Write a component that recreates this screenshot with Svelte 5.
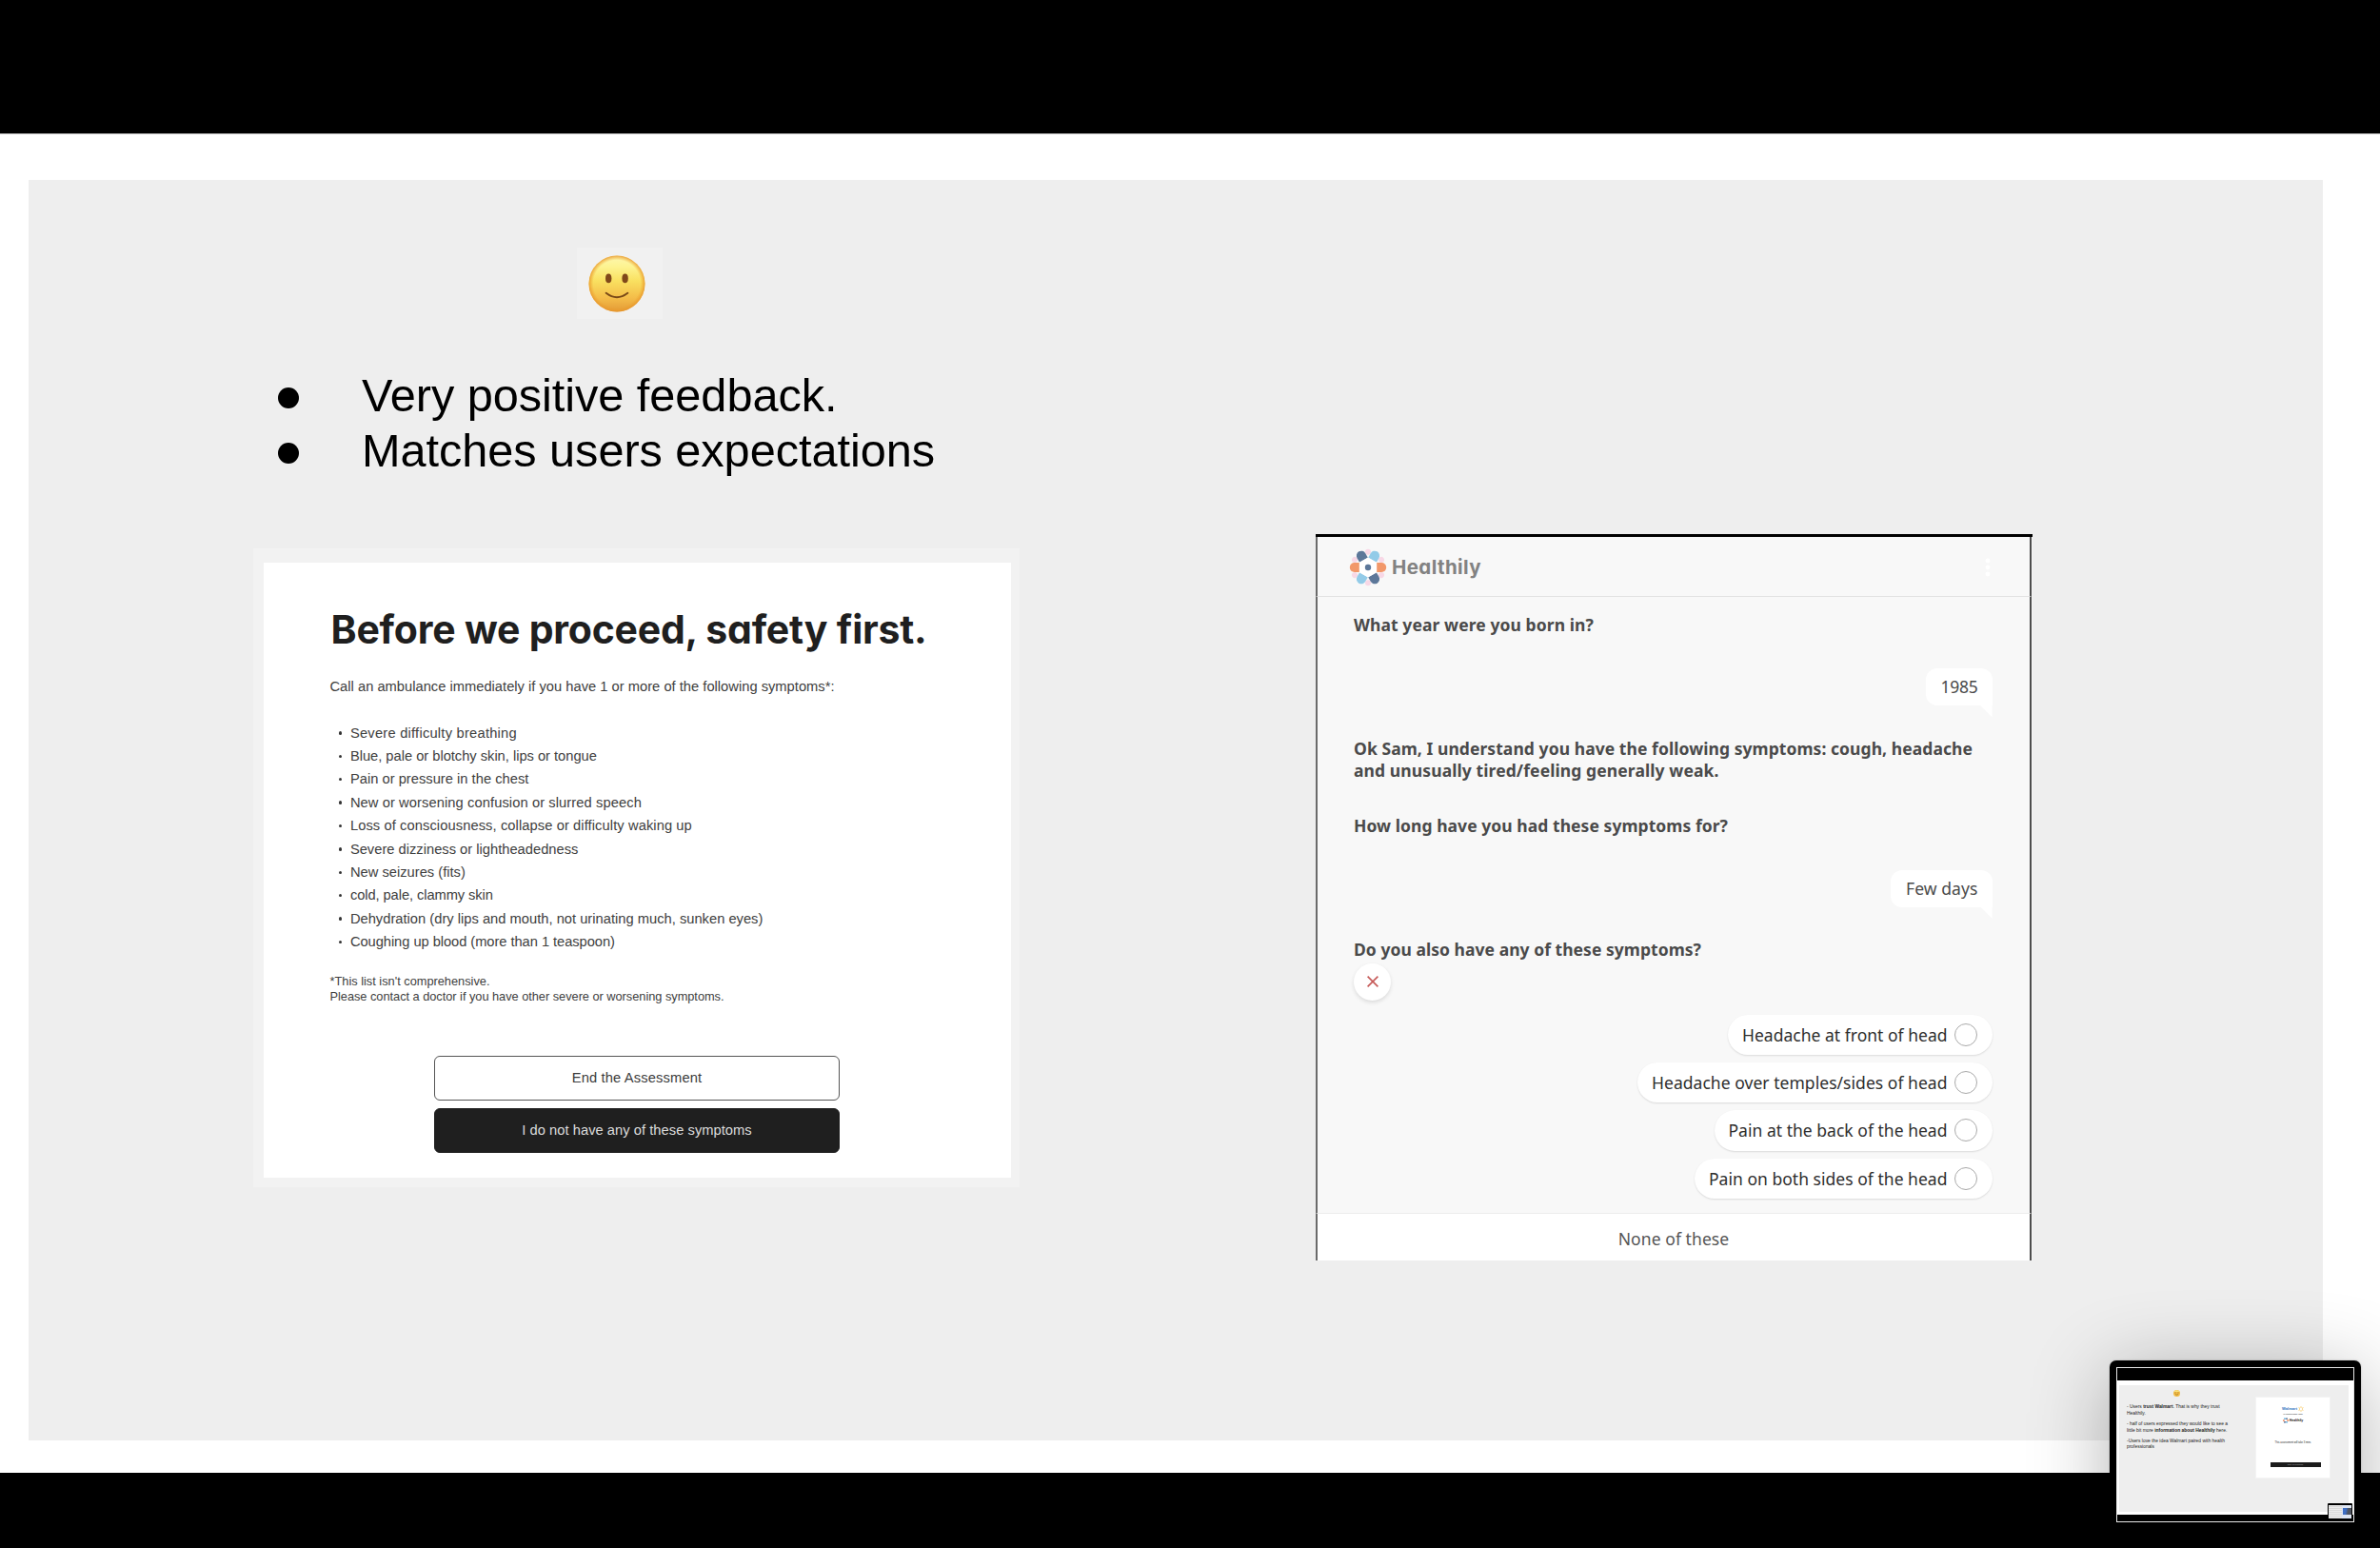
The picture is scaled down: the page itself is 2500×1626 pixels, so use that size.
<script>
  const feedback = [
    { text: 'Very positive feedback.', width: 499.5 },
    { text: 'Matches users expectations', width: 602 }
  ];

  const warnings = [
    { text: 'Severe difficulty breathing', width: 175 },
    { text: 'Blue, pale or blotchy skin, lips or tongue', width: 259 },
    { text: 'Pain or pressure in the chest', width: 187.5 },
    { text: 'New or worsening confusion or slurred speech', width: 306 },
    { text: 'Loss of consciousness, collapse or difficulty waking up', width: 359 },
    { text: 'Severe dizziness or lightheadedness', width: 239.5 },
    { text: 'New seizures (fits)', width: 121 },
    { text: 'cold, pale, clammy skin', width: 150 },
    { text: 'Dehydration (dry lips and mouth, not urinating much, sunken eyes)', width: 433.5 },
    { text: 'Coughing up blood (more than 1 teaspoon)', width: 278 }
  ];

  const options = [
    { text: 'Headache at front of head', width: 215.5 },
    { text: 'Headache over temples/sides of head', width: 310.5 },
    { text: 'Pain at the back of the head', width: 230 },
    { text: 'Pain on both sides of the head', width: 250.5 }
  ];

  const petals = [
    { angle: 0, color: '#93cbe8' },
    { angle: 60, color: '#f2986a' },
    { angle: 120, color: '#5c7799' },
    { angle: 180, color: '#93cbe8' },
    { angle: 240, color: '#f2986a' },
    { angle: 300, color: '#5c7799' }
  ];

  // Spread the tracking so a line takes up exactly `width` pixels
  function track(node, width) {
    const natural = node.getBoundingClientRect().width;
    node.style.letterSpacing = `${(width - natural) / node.textContent.length}px`;
  }
</script>

<main class="stage">
  <section class="canvas">
    <div class="slide">
      <div class="findings">
        <div class="mood">
          <svg viewBox="0 0 60 60" width="60" height="60">
            <defs>
              <linearGradient id="face" x1="0" y1="0" x2="0" y2="1">
                <stop offset="0" stop-color="#fdf7b0" />
                <stop offset="0.2" stop-color="#fdf390" />
                <stop offset="0.45" stop-color="#f9e060" />
                <stop offset="0.75" stop-color="#f4bd49" />
                <stop offset="1" stop-color="#e39a36" />
              </linearGradient>
              <radialGradient id="rim">
                <stop offset="0.84" stop-color="#eda02c" stop-opacity="0" />
                <stop offset="1" stop-color="#e8962c" stop-opacity="0.85" />
              </radialGradient>
            </defs>
            <circle cx="30" cy="30" r="29.5" fill="url(#face)" />
            <circle cx="30" cy="30" r="29.5" fill="url(#rim)" />
            <ellipse cx="21.2" cy="24.4" rx="3.2" ry="4.8" fill="#80481a" />
            <ellipse cx="38.6" cy="24.4" rx="3.2" ry="4.8" fill="#80481a" />
            <path d="M18.6 39.8 Q30 48.6 41.4 39.8" fill="none" stroke="#7a4a18" stroke-width="1.9" stroke-linecap="round" />
          </svg>
        </div>

        <ul class="feedback">
          {#each feedback as item}
            <li><i class="dot"></i><span class="line" use:track={item.width}>{item.text}</span></li>
          {/each}
        </ul>

        <div class="frame">
          <article class="safety">
            <h1><span class="line" use:track={626}>Before we proceed, safety first.</span></h1>
            <p class="lead">
              <span class="line" use:track={530}>Call an ambulance immediately if you have 1 or more of the following symptoms*:</span>
            </p>
            <ul class="warnings">
              {#each warnings as item}
                <li><i class="point"></i><span class="line" use:track={item.width}>{item.text}</span></li>
              {/each}
            </ul>
            <p class="footnote">
              <span class="line" use:track={168}>*This list isn't comprehensive.</span>
              <span class="line" use:track={414}>Please contact a doctor if you have other severe or worsening symptoms.</span>
            </p>
            <div class="actions">
              <button class="btn"><span class="line" use:track={136.5}>End the Assessment</span></button>
              <button class="btn btn-dark"><span class="line" use:track={241.5}>I do not have any of these symptoms</span></button>
            </div>
          </article>
        </div>
      </div>

      <div class="chat">
        <header class="chat-header">
          <svg class="logo" viewBox="-20 -20 40 40" width="40" height="40">
            {#each petals as petal}
              <circle cx="0" cy="-16.2" r="3" fill="#f8d8e6" transform="rotate({petal.angle})" />
            {/each}
            {#each petals as petal}
              <path
                d="M-5 -9 L-5 -14.2 A5 5 0 0 1 5 -14.2 L5 -9 Z"
                fill={petal.color}
                transform="rotate({petal.angle + 30})"
              />
            {/each}
            <path d="M0 -10.6 L9.2 -5.3 V5.3 L0 10.6 L-9.2 5.3 V-5.3 Z" fill="#fff" />
            <circle r="3.2" fill="#5c7799" />
          </svg>
          <strong class="wordmark"><span class="line" use:track={94}>Healthily</span></strong>
          <svg class="menu" viewBox="0 0 6 20" width="6" height="20">
            <circle cx="3" cy="3" r="2.4" fill="#fff" />
            <circle cx="3" cy="10" r="2.4" fill="#fff" />
            <circle cx="3" cy="17" r="2.4" fill="#fff" />
          </svg>
        </header>

        <div class="thread">
          <p class="question"><span class="line" use:track={252}>What year were you born in?</span></p>
          <div class="bubble"><span class="line" use:track={39}>1985</span></div>
          <p class="question">
            <span class="line" use:track={650}>Ok Sam, I understand you have the following symptoms: cough, headache</span>
            <span class="line" use:track={383.5}>and unusually tired/feeling generally weak.</span>
          </p>
          <p class="question"><span class="line" use:track={393}>How long have you had these symptoms for?</span></p>
          <div class="bubble"><span class="line" use:track={75.5}>Few days</span></div>
          <p class="question"><span class="line" use:track={365}>Do you also have any of these symptoms?</span></p>
          <button class="dismiss" aria-label="Dismiss">
            <svg viewBox="0 0 12 12" width="12" height="12">
              <path d="M0.6 0.6 L11.4 11.4 M11.4 0.6 L0.6 11.4" stroke="#c65a58" stroke-width="1.6" />
            </svg>
          </button>
          <div class="options">
            {#each options as option}
              <label class="option">
                <span class="line" use:track={option.width}>{option.text}</span>
                <i class="radio"></i>
              </label>
            {/each}
          </div>
        </div>

        <footer class="chat-footer"><span class="line" use:track={116.5}>None of these</span></footer>
      </div>
    </div>
  </section>

  <aside class="preview">
    <div class="screen">
      <div class="mini-canvas">
        <div class="mini-slide">
          <div class="notes">
            <svg class="mini-face" viewBox="0 0 8 8" width="7" height="7">
              <circle cx="4" cy="4" r="4" fill="#f2bd45" />
              <path d="M0.5 2.4 A4 4 0 0 1 7.5 2.4 Z" fill="#f8e27c" />
              <path d="M1.6 3.4 H3 M5 3.4 H6.4 M2.2 5.2 Q4 6.4 5.8 5.2" fill="none" stroke="#8a5a20" stroke-width="0.6" />
            </svg>
            <p>- Users <b>trust Walmart</b>. That is why they trust<br />Healthily.</p>
            <p>- half of users expressed they would like to see a<br />little bit more <b>information about Healthily</b> here.</p>
            <p>-Users love the idea Walmart paired with health<br />professionals</p>
          </div>
          <div class="partner">
            <div class="walmart">
              <span>Walmart</span>
              <svg viewBox="-4 -4 8 8" width="6" height="6">
                {#each petals as petal}
                  <path d="M0 -1.5 V-3.6" stroke="#f7c04a" stroke-width="1.1" transform="rotate({petal.angle})" />
                {/each}
              </svg>
            </div>
            <div class="with">in partnership with</div>
            <div class="healthily">
              <svg viewBox="-4 -4 8 8" width="6" height="6">
                {#each petals as petal, i}
                  <circle cy="-2.8" r="1.15" fill={['#2b4a7c', '#e8622c', '#3d9fd6'][i % 3]} transform="rotate({petal.angle + 30})" />
                {/each}
              </svg>
              <span>Healthily</span>
            </div>
            <div class="time">This assessment will take 3 mins</div>
            <div class="start">Start your symptoms</div>
          </div>
        </div>
      </div>
      <div class="nested">
        <div class="nested-text"></div>
        <div class="nested-image"></div>
      </div>
    </div>
  </aside>
</main>

<style>
  :global(body) {
    margin: 0;
    background: #000;
  }

  .stage {
    position: relative;
    box-sizing: border-box;
    width: 2500px;
    height: 1626px;
    padding: 140px 0 79px;
    background: #000;
    overflow: hidden;
    font-family: 'Liberation Sans', Arial, sans-serif;
  }

  .canvas {
    box-sizing: border-box;
    height: 1407px;
    padding: 48px 60px 34px 29.5px;
    border-top: 1px solid #a5a5a5;
    background: #fff;
  }

  .slide {
    display: flex;
    box-sizing: border-box;
    height: 1324px;
    padding-left: 236.5px;
    background: #eee;
  }

  h1,
  p,
  ul {
    margin: 0;
    padding: 0;
    list-style: none;
  }

  button {
    margin: 0;
    padding: 0;
    border: 0;
    font: inherit;
  }

  .line {
    display: inline-block;
    white-space: nowrap;
  }

  /* Left side */
  .findings {
    width: 805px;
    padding-top: 71px;
  }

  .mood {
    box-sizing: border-box;
    width: 90px;
    height: 75px;
    margin-left: 340px;
    padding: 7.5px 0 0 12px;
    background: #f1f1f1;
  }

  .feedback {
    margin-top: 51px;
    padding-left: 26px;
    font-size: 48.7px;
    line-height: 58px;
    color: #000;
  }

  .feedback li {
    display: flex;
    align-items: center;
    height: 58px;
  }

  .dot {
    width: 22px;
    height: 22px;
    margin: 5px 66px 0 0;
    border-radius: 50%;
    background: #000;
  }

  .frame {
    box-sizing: border-box;
    height: 671px;
    margin-top: 74px;
    padding: 15px 9px 10px 11px;
    background: #f2f2f2;
  }

  .safety {
    box-sizing: border-box;
    height: 646px;
    padding: 45px 0 0 69.5px;
    background: #fff;
    color: #404040;
    font-size: 14.7px;
  }

  h1 {
    padding-left: 1px;
    font-family: Inter, sans-serif;
    font-feature-settings: 'cv11';
    font-size: 41px;
    font-weight: 700;
    line-height: 50px;
    color: #1f1f1f;
  }

  .lead {
    margin-top: 23.4px;
    line-height: 24px;
  }

  .warnings {
    margin-top: 24.3px;
    padding-left: 9px;
  }

  .warnings li {
    display: flex;
    align-items: center;
    height: 24.4px;
    line-height: 24.4px;
  }

  .point {
    width: 3.4px;
    height: 3.4px;
    margin-right: 9px;
    border-radius: 50%;
    background: #333;
  }

  .footnote {
    display: flex;
    flex-direction: column;
    align-items: flex-start;
    margin-top: 21.1px;
    font-size: 12.8px;
    line-height: 16px;
  }

  .actions {
    display: flex;
    flex-direction: column;
    gap: 8px;
    width: 426px;
    margin: 54px 0 0 109.5px;
  }

  .btn {
    box-sizing: border-box;
    height: 47px;
    border: 1.5px solid #555;
    border-radius: 6px;
    background: #fff;
    color: #3c3c3c;
  }

  .btn-dark {
    border-color: #1f1f1f;
    background: #1f1f1f;
    color: #dcdcdc;
  }

  /* Right side */
  .chat {
    display: flex;
    flex-direction: column;
    box-sizing: border-box;
    width: 753px;
    height: 763px;
    margin: 372px 0 0 311px;
    border-top: 3px solid #000;
    background: #f4f4f4;
    font-family: 'Noto Sans', sans-serif;
    font-size: 17.5px;
  }

  .chat-header,
  .thread,
  .chat-footer {
    box-sizing: border-box;
    margin-right: 1px;
    border-left: 2px solid #6a6a6a;
    border-right: 2px solid #4c4c4c;
    background: #f8f8f8;
  }

  .chat-header {
    display: flex;
    align-items: center;
    height: 63px;
    padding: 1px 41px 0 33px;
    border-bottom: 1px solid #e2e2e2;
  }

  .wordmark {
    flex: 1;
    margin-left: 5px;
    font-family: Inter, sans-serif;
    font-feature-settings: 'cv11';
    font-size: 20.5px;
    font-weight: 700;
    line-height: 26px;
    color: #828282;
  }

  .thread {
    display: flex;
    flex-direction: column;
    align-items: flex-start;
    height: 647px;
    padding: 17.5px 39.5px 0 38px;
    color: #4a4a4a;
  }

  .question {
    display: flex;
    flex-direction: column;
    align-items: flex-start;
    font-weight: 700;
    line-height: 23.5px;
  }

  .bubble {
    position: relative;
    align-self: flex-end;
    height: 39px;
    margin: 34.2px 0 33.8px;
    padding: 0 15px 0 16px;
    border-radius: 12px 12px 0 12px;
    background: #fff;
    line-height: 38px;
  }

  .bubble::after {
    content: '';
    position: absolute;
    top: 38px;
    right: 0;
    width: 13px;
    height: 13px;
    background: #fff;
    clip-path: polygon(0 0, 100% 0, 100% 100%);
  }

  .question + .question {
    margin-top: 34px;
  }

  .dismiss {
    display: flex;
    align-items: center;
    justify-content: center;
    width: 39px;
    height: 39px;
    margin-top: 1.8px;
    border-radius: 50%;
    background: #fff;
    box-shadow: 0 2px 4px rgba(0, 0, 0, 0.12);
  }

  .options {
    display: flex;
    flex-direction: column;
    align-items: flex-end;
    align-self: flex-end;
    gap: 8px;
    margin-top: 15.2px;
    color: #2e2e2e;
  }

  .option {
    display: flex;
    align-items: center;
    gap: 7.5px;
    height: 42.2px;
    padding: 0 15.5px 0 15px;
    border-radius: 22px;
    background: #fff;
    box-shadow: 0 1px 2px rgba(0, 0, 0, 0.12);
  }

  .radio {
    box-sizing: border-box;
    width: 24px;
    height: 24px;
    border: 1.5px solid #aaa;
    border-radius: 50%;
  }

  .chat-footer {
    height: 50px;
    padding-top: 3px;
    border-top: 1px solid #ececec;
    background: #fff;
    color: #555;
    line-height: 46px;
    text-align: center;
  }

  /* Floating screenshot preview */
  .preview {
    position: absolute;
    top: 1429px;
    left: 2216px;
    box-sizing: border-box;
    width: 264px;
    height: 190px;
    padding: 7px 7px 0;
    border-radius: 7px;
    background: #000;
    box-shadow:
      0 0 2px rgba(0, 0, 0, 0.3),
      0 14px 84px rgba(0, 0, 0, 0.3);
  }

  .screen {
    position: relative;
    box-sizing: border-box;
    width: 250px;
    height: 163px;
    padding: 13px 0 7px;
    border: 1px solid #e6e6e6;
    background: #000;
  }

  .mini-canvas {
    box-sizing: border-box;
    height: 141px;
    padding: 5px 5px 3px 2px;
    background: #fff;
  }

  .mini-slide {
    display: flex;
    height: 133px;
    background: #eee;
  }

  .notes {
    box-sizing: border-box;
    width: 143px;
    padding: 5px 0 0 8px;
    font-size: 4.93px;
    line-height: 6.7px;
    color: #222;
    white-space: nowrap;
  }

  .mini-face {
    display: block;
    margin: 0 0 8px 49px;
  }

  .notes p {
    margin-bottom: 4.4px;
  }

  .partner {
    display: flex;
    flex-direction: column;
    align-items: center;
    box-sizing: border-box;
    width: 79px;
    height: 86px;
    margin-top: 12px;
    padding-top: 9px;
    border: 1px solid #f3f3f3;
    background: #fff;
    font-size: 2.6px;
    line-height: 4px;
    color: #222;
    white-space: nowrap;
  }

  .walmart,
  .healthily {
    display: flex;
    align-items: center;
    gap: 1px;
    height: 6px;
    font-size: 4.1px;
    font-weight: 700;
  }

  .walmart {
    color: #2f76bd;
  }

  .with {
    margin: 1px 0;
    font-size: 2.5px;
  }

  .healthily {
    font-size: 3.5px;
    color: #111;
  }

  .time {
    margin-top: 19px;
  }

  .start {
    width: 53px;
    height: 5px;
    margin: 18px 0 0 5px;
    background: #1c1c1c;
    color: #bbb;
    font-size: 1.8px;
    line-height: 5px;
    text-align: center;
  }

  .nested {
    position: absolute;
    right: 1px;
    bottom: 2px;
    display: flex;
    box-sizing: border-box;
    width: 26px;
    height: 17px;
    padding: 2px 1px 1px;
    border-radius: 1px;
    background: #000;
  }

  .nested-text {
    width: 14px;
    background: repeating-linear-gradient(#ececec 0 1px, #dadada 1px 2px);
  }

  .nested-image {
    flex: 1;
    border: solid #dfe6f3;
    border-width: 3px 0 4px 1px;
    background: linear-gradient(100deg, #3f6fc4 35%, #505560 60%);
  }
</style>
